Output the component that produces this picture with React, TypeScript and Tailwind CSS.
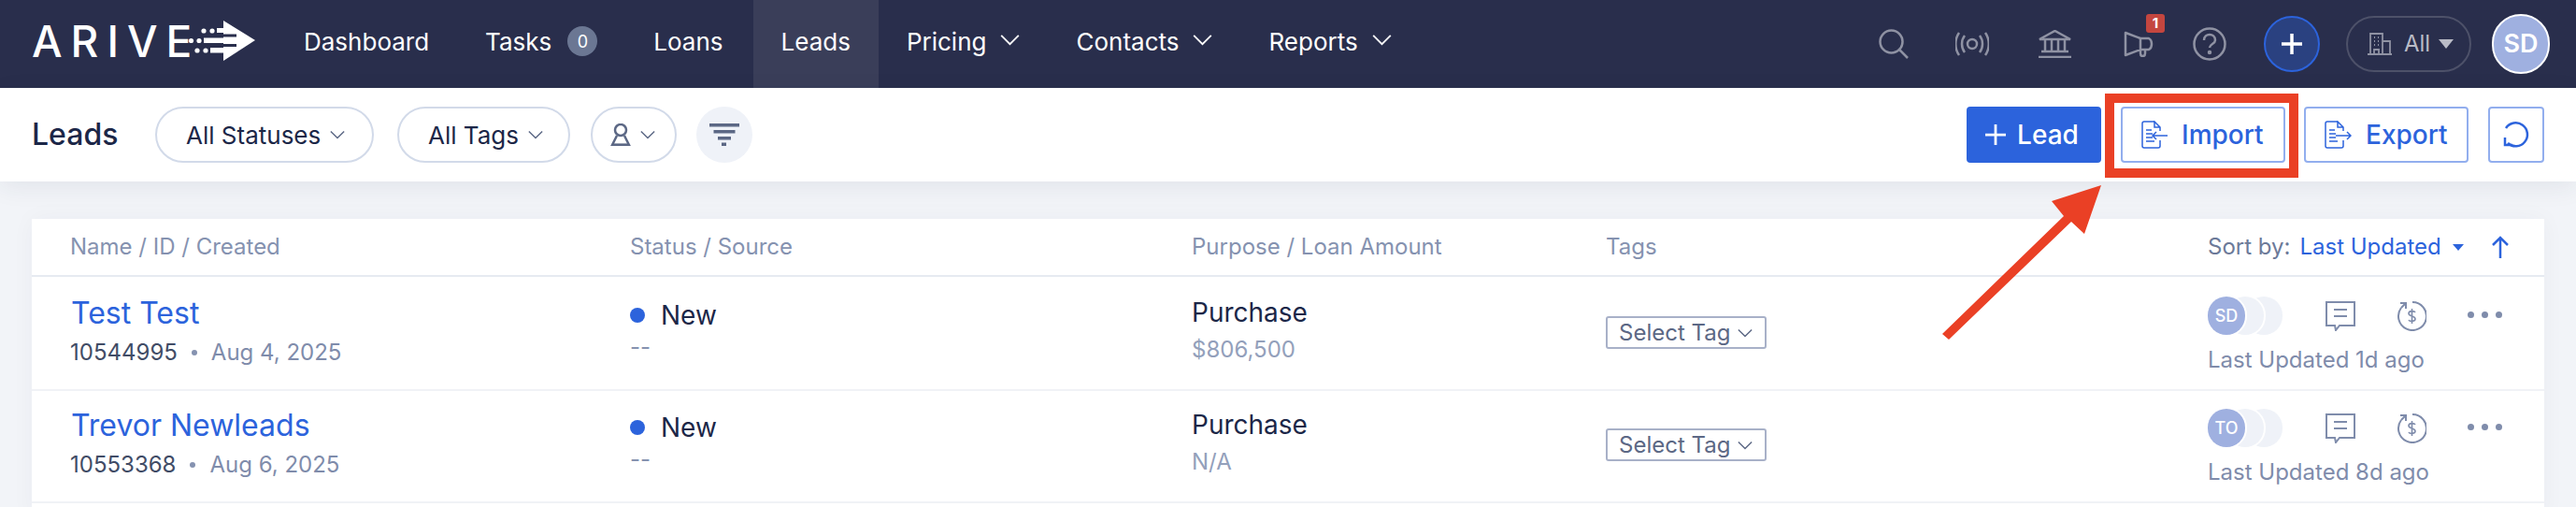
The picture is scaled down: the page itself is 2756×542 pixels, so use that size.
import type { ReactNode } from "react";

const Chevron = ({ className }: { className: string }) => (
  <svg viewBox="0 0 22 14" fill="none" stroke="currentColor" strokeWidth="2" className={className}>
    <path d="M1 2l10 10L21 2" />
  </svg>
);

function ArriveMark() {
  return (
    <svg viewBox="0 0 100 70" className="w-[100px] h-[70px] shrink-0 mb-[4px]" fill="#fff">
      <polygon points="49,12 83,33 49,55" />
      <rect x="42" y="20" width="14" height="5" />
      <rect x="28" y="30.5" width="28" height="5.5" />
      <rect x="35" y="41" width="20" height="5.5" />
      <rect x="40" y="26.5" width="23" height="3" fill="#292e4c" />
      <rect x="40" y="37" width="23" height="3" fill="#292e4c" />
      <circle cx="28" cy="23" r="2.6" />
      <circle cx="37" cy="23" r="2.6" />
      <circle cx="14.5" cy="33.5" r="2.6" />
      <circle cx="23" cy="33.5" r="2.6" />
      <circle cx="21" cy="44" r="2.6" />
      <circle cx="30" cy="44" r="2.6" />
    </svg>
  );
}

function NavItem({ label, menu, active, children }: { label: string; menu?: boolean; active?: boolean; children?: ReactNode }) {
  return (
    <div className={`flex items-center h-full px-[30px] pb-[6px] ${active ? "bg-[#3a3e59] ml-[2px]" : ""}`}>
      <span>{label}</span>
      {children}
      {menu && <Chevron className="w-[21px] h-[13px] ml-[15px] text-white mb-[3px]" />}
    </div>
  );
}

function FileIcon({ dir }: { dir: "in" | "out" }) {
  return (
    <svg viewBox="0 0 30 30" fill="none" stroke="#2c63dc" strokeWidth="1.5" className="w-[30px] h-[30px] shrink-0">
      <path d="M15 1H4a2 2 0 0 0-2 2v24a2 2 0 0 0 2 2h15a2 2 0 0 0 2-2v-6M21 11V7l-6-6v6h6" />
      <path d="M6 10h6M6 14h7M6 18h7M6 22h9" />
      {dir === "in" ? <path d="M29 16H13M17 12l-4 4 4 4" /> : <path d="M13 16h16M25 12l4 4-4 4" />}
    </svg>
  );
}

function Avatars({ initials }: { initials: string }) {
  return (
    <div className="flex w-[80px] h-[41px]">
      <div className="w-[40px] h-[41px] shrink-0 rounded-full bg-[#9fb0e0] ring-2 ring-white text-white text-[18px] font-medium flex items-center justify-center z-20">
        {initials}
      </div>
      <div className="w-[40px] h-[41px] shrink-0 rounded-full bg-[#eff2f8] ring-2 ring-white -ml-[20px] z-10" />
      <div className="w-[40px] h-[41px] shrink-0 rounded-full bg-[#eff2f8] -ml-[20px]" />
    </div>
  );
}

function LeadRow({ name, id, created, amount, updated, initials }: { name: string; id: string; created: string; amount: string; updated: string; initials: string }) {
  return (
    <div className="grid grid-cols-[599px_601px_443px_644px_1fr] pl-[41px] h-[120px] border-b-2 border-[#f0f2f6]">
      <div className="pt-[18px]">
        <div className="ml-[1px] text-[32px] leading-[38px] text-[#2c63dc]">{name}</div>
        <div className="mt-[7px] text-[24px] leading-[32px] flex items-center">
          <span className="text-[#414c66]">{id}</span>
          <span className="w-[6px] h-[6px] rounded-full bg-[#8592b0] mx-[15px]" />
          <span className="text-[#7f8cab]">{created}</span>
        </div>
      </div>
      <div className="pt-[21px]">
        <div className="flex items-center text-[28px] leading-[36px] text-[#1c2748]">
          <span className="w-[16px] h-[16px] rounded-full bg-[#2c63dc] mr-[17px]" />
          New
        </div>
        <div className="text-[24px] leading-[32px] text-[#8592b0]">--</div>
      </div>
      <div className="pt-[18px]">
        <div className="text-[28px] leading-[36px] text-[#1c2748]">Purchase</div>
        <div className="mt-[6px] text-[24px] leading-[32px] text-[#93a0bb]">{amount}</div>
      </div>
      <div className="pt-[40px]">
        <div className="w-[172px] h-[35px] flex items-center justify-between pl-[12px] pr-[13px] border-2 border-[#a8b1c8] rounded-[3px] text-[24px] text-[#5c6885]">
          Select Tag
          <Chevron className="w-[16px] h-[10px] text-[#5c6885]" />
        </div>
      </div>
      <div className="pt-[19px]">
        <div className="flex items-start">
          <Avatars initials={initials} />
          <svg viewBox="0 0 32 32" fill="none" stroke="#7f8cab" strokeWidth="2" className="w-[32px] h-[32px] ml-[46px] mt-[5px]">
            <path d="M1 1h30v25H15l-4 5-1-5H1z" />
            <path d="M9 9h14M9 16h14" />
          </svg>
          <svg viewBox="0 0 32 32" fill="none" stroke="#7f8cab" strokeWidth="2" className="w-[32px] h-[32px] ml-[44px] mt-[5px]">
            <path d="M17 1a15 15 0 1 1-12 6" />
            <path d="M4 2h6v6M10 2 5 7" />
            <path d="M20 12c-1-2-7-2-7 1 0 4 7 2 7 6 0 3-6 3-7 1M16.5 8v16" strokeWidth="1.6" />
          </svg>
          <div className="flex gap-[8px] ml-[44px] mt-[16px]">
            <span className="w-[7px] h-[7px] rounded-full bg-[#7f8cab]" />
            <span className="w-[7px] h-[7px] rounded-full bg-[#7f8cab]" />
            <span className="w-[7px] h-[7px] rounded-full bg-[#7f8cab]" />
          </div>
        </div>
        <div className="mt-[11px] text-[24px] leading-[32px] text-[#7f8cab]">{updated}</div>
      </div>
    </div>
  );
}

export default function App() {
  return (
    <div className="relative h-[542px] w-[2756px] overflow-hidden bg-[#f2f4f8] font-['Inter',sans-serif]">
      <header className="flex items-center h-[94px] bg-[#292e4c] text-white text-[26px]">
        <div className="flex items-center pl-[34px] w-[295px] shrink-0">
          <span className="text-[46px] leading-none font-medium tracking-[9px] w-[156px] shrink-0 mb-[6px]">ARIVE</span>
          <ArriveMark />
        </div>
        <nav className="flex items-center h-full">
          <NavItem label="Dashboard" />
          <NavItem label="Tasks">
            <span className="ml-[17px] w-[32px] h-[32px] rounded-full bg-[#6b7793] text-[18px] flex items-center justify-center">0</span>
          </NavItem>
          <NavItem label="Loans" />
          <NavItem label="Leads" active />
          <NavItem label="Pricing" menu />
          <NavItem label="Contacts" menu />
          <NavItem label="Reports" menu />
        </nav>
        <div className="ml-auto flex items-center pr-[28px]">
          <svg viewBox="0 0 32 32" fill="none" stroke="#8f92a3" strokeWidth="2.5" className="w-[32px] h-[32px]">
            <circle cx="13.5" cy="13.5" r="12" />
            <path d="M22.5 22.5 31 31" />
          </svg>
          <svg viewBox="0 0 36 28" fill="none" stroke="#8f92a3" strokeWidth="2.5" className="w-[36px] h-[28px] ml-[50px]">
            <circle cx="18" cy="14" r="5" />
            <path d="M10 5c-4 5-4 13 0 18M26 5c4 5 4 13 0 18M4 2C-1 9-1 19 4 26M32 2c5 7 5 17 0 24" />
          </svg>
          <svg viewBox="0 0 37 30" fill="none" stroke="#8f92a3" strokeWidth="2.5" className="w-[37px] h-[30px] ml-[52px]">
            <path d="M2 10 18.5 1 35 10zM4 23h29M1 29h35M8 11v11M15 11v11M22 11v11M29 11v11" />
          </svg>
          <div className="relative ml-[55px]">
            <svg viewBox="0 0 32 28" fill="none" stroke="#8f92a3" strokeWidth="2.5" strokeLinejoin="round" className="w-[32px] h-[28px]">
              <path d="M2 2v24l16-6h9c4-2 4-10 0-12h-9zM18 8v12M18 20v4c0 4 5 4 5 0v-4" />
            </svg>
            <span className="absolute -top-[18px] left-[24px] w-[20px] h-[20px] rounded-[3px] bg-[#c4463f] text-white text-[15px] font-bold flex items-center justify-center">1</span>
          </div>
          <svg viewBox="0 0 36 36" fill="none" stroke="#8f92a3" strokeWidth="2.5" className="w-[36px] h-[36px] ml-[42px]">
            <circle cx="18" cy="18" r="16.5" />
            <path d="M12 14c0-8 12-8 12 0 0 4-6 4-6 8" />
            <circle cx="18" cy="27" r="1" fill="#8f92a3" />
          </svg>
          <div className="ml-[40px] w-[60px] h-[60px] rounded-full bg-[#2a4180] border-2 border-[#2c63dc] flex items-center justify-center">
            <svg viewBox="0 0 22 22" stroke="#fff" strokeWidth="3.5" className="w-[22px] h-[22px]">
              <path d="M11 0v22M0 11h22" />
            </svg>
          </div>
          <div className="ml-[28px] w-[134px] h-[60px] rounded-full border-2 border-[#4d5169] flex items-center pl-[20px] text-[#b9bbc6] text-[24px]">
            <svg viewBox="0 0 28 24" fill="none" stroke="#8f92a3" strokeWidth="1.8" className="w-[28px] h-[24px] mr-[12px]">
              <path d="M4 23V1h13v22M17 9h8v14M1 23h26M8 5h1M12 5h1M8 9h1M12 9h1M8 13h1M12 13h1M8 23v-5h5v5" />
            </svg>
            All
            <span className="ml-[9px] border-x-[8px] border-t-[10px] border-x-transparent border-t-[#b9bbc6]" />
          </div>
          <div className="ml-[22px] w-[62px] h-[64px] rounded-full bg-[#9fb0e0] border-2 border-white flex items-center justify-center text-[27px] font-semibold">
            SD
          </div>
        </div>
      </header>

      <section className="relative z-10 flex items-center h-[100px] bg-white px-[34px] shadow-[0_6px_24px_rgba(40,50,80,0.08)]">
        <h1 className="w-[132px] text-[32px] font-medium text-[#1c2748]">Leads</h1>
        <div className="flex items-center w-[234px] h-[60px] rounded-full border-2 border-[#d2dae9] pl-[31px] text-[26px] text-[#1c2748]">
          All Statuses
          <Chevron className="w-[16px] h-[10px] ml-[10px] text-[#5c6885]" />
        </div>
        <div className="flex items-center w-[185px] h-[60px] ml-[25px] rounded-full border-2 border-[#d2dae9] pl-[31px] text-[26px] text-[#1c2748]">
          All Tags
          <Chevron className="w-[16px] h-[10px] ml-[10px] text-[#5c6885]" />
        </div>
        <div className="flex items-center w-[92px] h-[60px] ml-[22px] rounded-full border-2 border-[#d2dae9] pl-[19px]">
          <svg viewBox="0 0 22 24" fill="none" stroke="#5c6885" strokeWidth="2.5" className="w-[22px] h-[24px]">
            <circle cx="11" cy="7" r="6" />
            <path d="M7 13 2 23h18l-5-10" fill="none" />
            <path d="M2 23h18" strokeWidth="3" />
          </svg>
          <Chevron className="w-[16px] h-[10px] ml-[10px] text-[#5c6885]" />
        </div>
        <div className="flex items-center justify-center w-[60px] h-[60px] ml-[21px] rounded-full bg-[#eff2f8]">
          <svg viewBox="0 0 32 24" fill="#5c6885" className="w-[32px] h-[24px]">
            <rect width="32" height="3.5" />
            <rect x="4.5" y="7" width="23" height="3.5" />
            <rect x="9" y="14" width="14" height="3.5" />
            <rect x="13" y="20.5" width="5" height="3.5" />
          </svg>
        </div>

        <div className="ml-auto flex items-center text-[28px]">
          <div className="flex items-center justify-center w-[144px] h-[60px] rounded-[4px] bg-[#2c63dc] text-white font-medium">
            <svg viewBox="0 0 20 20" stroke="#fff" strokeWidth="2.5" className="w-[22px] h-[22px] mr-[12px] ml-[-4px]">
              <path d="M10 0v20M0 10h20" />
            </svg>
            Lead
          </div>
          <div className="relative flex items-center w-[176px] h-[60px] ml-[21px] pl-[19px] rounded-[4px] border-2 border-[#92aeee] text-[#2c63dc] font-medium">
            <FileIcon dir="in" />
            <span className="ml-[14px]">Import</span>
            <span className="absolute -left-[19px] -right-[16px] -top-[16px] -bottom-[18px] border-[10px] border-[#ea4025]" />
          </div>
          <div className="flex items-center w-[176px] h-[60px] ml-[20px] pl-[19px] rounded-[4px] border-2 border-[#92aeee] text-[#2c63dc] font-medium">
            <FileIcon dir="out" />
            <span className="ml-[15px]">Export</span>
          </div>
          <div className="flex items-center justify-center w-[60px] h-[60px] ml-[21px] rounded-[4px] border-2 border-[#92aeee]">
            <svg viewBox="0 0 28 30" fill="none" stroke="#2c63dc" strokeWidth="2.5" className="w-[28px] h-[30px]">
              <path d="M3 8A12.5 12.5 0 1 1 5 24" />
              <path d="M2 18v8h8" />
            </svg>
          </div>
        </div>
      </section>

      <main className="mt-[40px] mx-[34px] h-[320px] bg-white shadow-[0_0_24px_rgba(40,50,80,0.04)]">
        <div className="grid grid-cols-[599px_601px_443px_644px_1fr] items-center h-[62px] pl-[41px] border-b-2 border-[#e6eaf1] mb-[2px] text-[24px] text-[#8592b0]">
          <span>Name / ID / Created</span>
          <span>Status / Source</span>
          <span>Purpose / Loan Amount</span>
          <span>Tags</span>
          <div className="flex items-center">
            <span className="text-[#6c7a99]">Sort by:</span>
            <span className="ml-[10px] text-[#2c63dc]">Last Updated</span>
            <span className="ml-[12px] border-x-[6px] border-t-[7px] border-x-transparent border-t-[#2c63dc]" />
            <svg viewBox="0 0 20 24" fill="none" stroke="#2c63dc" strokeWidth="2.5" className="w-[20px] h-[24px] ml-[29px]">
              <path d="M10 24V2M2 10l8-8 8 8" />
            </svg>
          </div>
        </div>
        <LeadRow name="Test Test" id="10544995" created="Aug 4, 2025" amount="$806,500" updated="Last Updated 1d ago" initials="SD" />
        <LeadRow name="Trevor Newleads" id="10553368" created="Aug 6, 2025" amount="N/A" updated="Last Updated 8d ago" initials="TO" />
      </main>

      {/* annotation arrow pasted over the screenshot */}
      <svg viewBox="0 0 2756 542" className="absolute inset-0 z-20 w-[2756px] h-[542px] pointer-events-none" fill="#ea4025">
        <polygon points="2248,198 2195,215 2208,231 2078,357 2085,363 2216,237 2230,250" />
      </svg>
    </div>
  );
}
